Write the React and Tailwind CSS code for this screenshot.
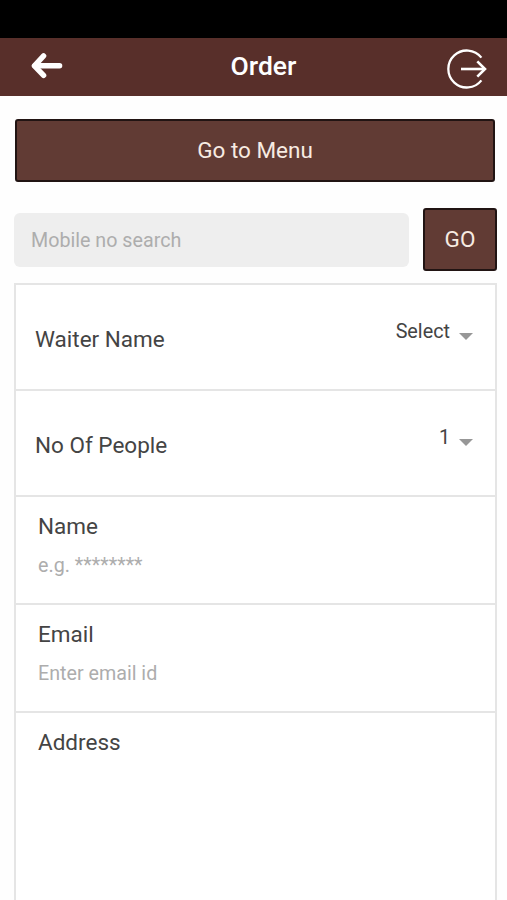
import React from 'react';

const BackArrow = () => (
  <svg width="32" height="26" viewBox="0 0 32 26" fill="none" stroke="#fff" strokeWidth="5.4" strokeLinecap="round" strokeLinejoin="round">
    <path d="M12.6 2.9 L3.4 12.8 L12.6 22.4" />
    <path d="M4 12.8 H28.6" />
  </svg>
);

const LogoutIcon = () => (
  <svg width="42" height="42" viewBox="0 0 42 42" fill="none" stroke="#fff" strokeWidth="2.3">
    <path d="M35.4 9.6 A18.5 18.5 0 1 0 35.4 32.4" />
    <path d="M15 21 H38.6" strokeWidth="2.6" />
    <path d="M31.3 13.4 L39 21 L31.3 28.6" strokeWidth="2.6" />
  </svg>
);

const Caret = () => (
  <svg width="14" height="7" viewBox="0 0 14 7" className="mt-[3px]">
    <path d="M0 0 H14 L7 7 Z" fill="#979797" />
  </svg>
);

const selectRows = [
  { label: 'Waiter Name', value: 'Select' },
  { label: 'No Of People', value: '1' },
];

const inputRows = [
  { label: 'Name', placeholder: 'e.g. ********' },
  { label: 'Email', placeholder: 'Enter email id' },
];

const App = () => {
  return (
    <div className="w-[507px] h-[900px] overflow-hidden flex flex-col bg-[#fefefe] font-[Roboto,sans-serif] text-[#444]">
      <div className="h-[38px] shrink-0 bg-black" />

      <header className="h-[58px] shrink-0 bg-[#582f2a] grid grid-cols-[1fr_auto_1fr] items-center pl-[31px] pr-[19px]">
        <div className="-mt-[3px]">
          <BackArrow />
        </div>
        <h1 className="text-white text-[26.5px] leading-8 font-medium -mt-[3px] ml-2">Order</h1>
        <div className="justify-self-end mt-1">
          <LogoutIcon />
        </div>
      </header>

      <main className="flex flex-col flex-1 pl-[14px] pr-[10px]">
        <button className="mt-[23px] ml-px mr-[2px] h-[63px] shrink-0 rounded-[3px] border-2 border-[#211413] bg-[#613b34] text-[#f7ebe2] text-[22.5px]">
          Go to Menu
        </button>

        <div className="mt-[26px] flex items-center justify-between shrink-0">
          <div className="w-[395px] h-[54px] rounded-md bg-[#eee] px-[17px] pt-[2px] flex items-center text-[19.7px] text-[#adadad]">
            Mobile no search
          </div>
          <button className="w-[74px] h-[63px] rounded-[3px] border-2 border-[#211413] bg-[#613b34] text-[#f7ebe2] text-[22.5px]">
            GO
          </button>
        </div>

        <div className="mt-3 flex-1 border-2 border-b-0 border-[#e5e5e5] bg-white">
          {selectRows.map((row) => (
            <div
              key={row.label}
              className="h-[106px] border-b-2 border-[#e5e5e5] pl-[19px] pr-[22px] flex items-center justify-between"
            >
              <span className="text-[22.5px] leading-7 mt-1">{row.label}</span>
              <div className="flex items-center gap-[9px] -mt-[5px]">
                <span className="text-[19.8px] leading-6 -mt-[6px]">{row.value}</span>
                <Caret />
              </div>
            </div>
          ))}

          {inputRows.map((row) => (
            <div key={row.label} className="h-[108px] border-b-2 border-[#e5e5e5] px-[22px] pt-[15px]">
              <p className="text-[22.5px] leading-7">{row.label}</p>
              <p className="mt-[14px] text-[19.7px] leading-6 text-[#adadad]">{row.placeholder}</p>
            </div>
          ))}

          <div className="px-[22px] pt-[15px]">
            <p className="text-[22.5px] leading-7">Address</p>
          </div>
        </div>
      </main>
    </div>
  );
};

export default App;
